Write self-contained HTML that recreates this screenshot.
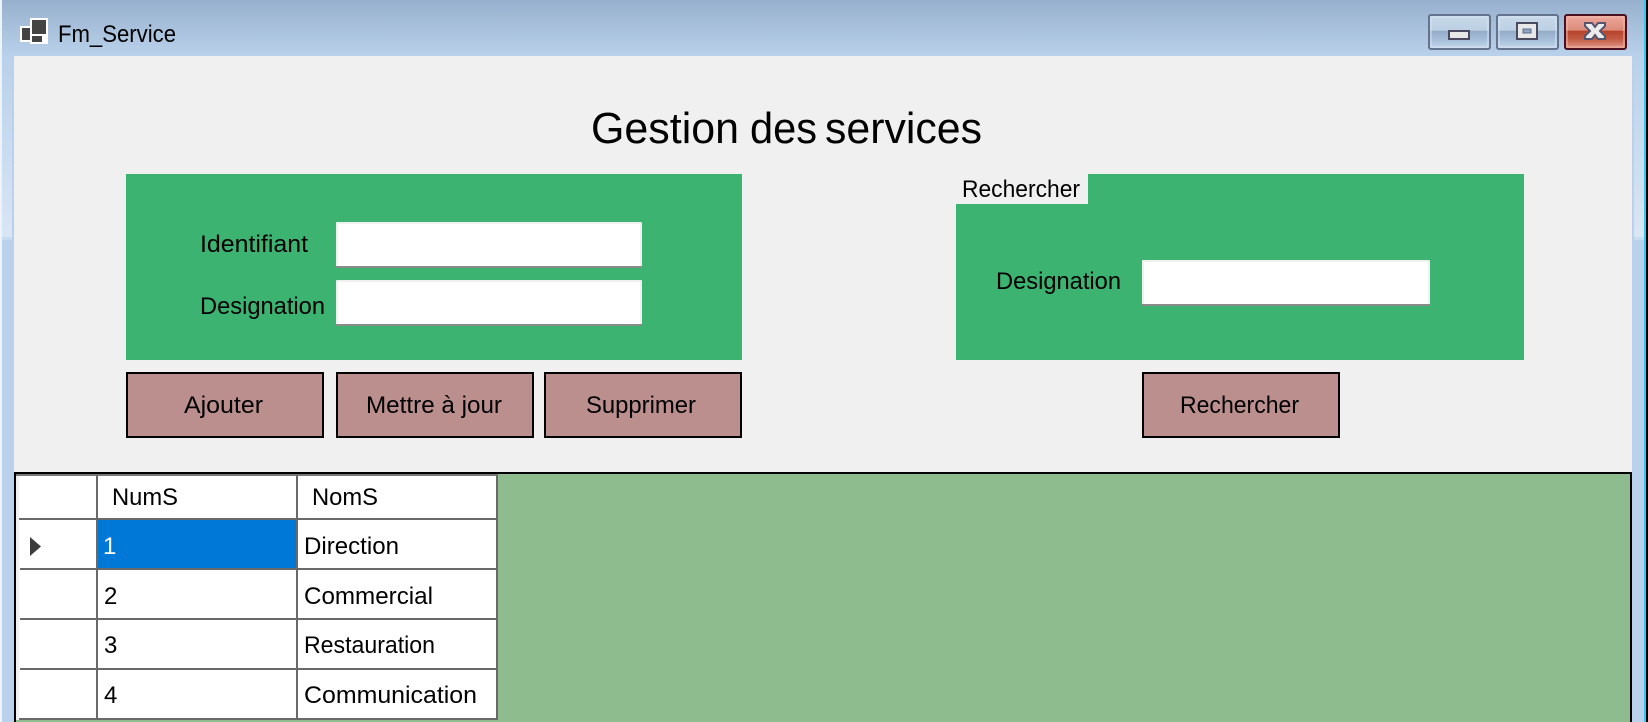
<!DOCTYPE html>
<html>
<head>
<meta charset="utf-8">
<title>Fm_Service</title>
<style>
html,body{margin:0;padding:0;width:1648px;height:722px;overflow:hidden;background:#b9d1ea}
svg{display:block}
text{font-family:"Liberation Sans",sans-serif;font-size:24px;fill:#000}
</style>
</head>
<body>
<svg width="1648" height="722" viewBox="0 0 1648 722" xmlns="http://www.w3.org/2000/svg">
<defs>
<linearGradient id="tb" x1="0" y1="0" x2="0" y2="1"><stop offset="0" stop-color="#97b0cd"/><stop offset="1" stop-color="#b9d1ea"/></linearGradient>
<linearGradient id="fr" x1="0" y1="0" x2="0" y2="1"><stop offset="0" stop-color="#b9d1ea"/><stop offset="1" stop-color="#d9e6f5"/></linearGradient>
<linearGradient id="bb" x1="0" y1="0" x2="0" y2="1"><stop offset="0" stop-color="#c8d9ea"/><stop offset=".45" stop-color="#bdd0e4"/><stop offset=".47" stop-color="#94acc6"/><stop offset=".7" stop-color="#a4bcd7"/><stop offset="1" stop-color="#c4d8ee"/></linearGradient>
<linearGradient id="cb" x1="0" y1="0" x2="0" y2="1"><stop offset="0" stop-color="#eeaaa0"/><stop offset=".45" stop-color="#dc8a78"/><stop offset=".47" stop-color="#b8432b"/><stop offset=".7" stop-color="#c25a44"/><stop offset="1" stop-color="#e49c8c"/></linearGradient>
</defs>

<!-- window frame -->
<rect width="1648" height="722" fill="#b9d1ea"/>
<rect width="1648" height="56" fill="url(#tb)"/>
<rect x="0" y="0" width="2" height="722" fill="#eef3f9"/>
<rect x="2" y="56" width="10" height="181" fill="url(#fr)"/>
<rect x="2" y="237" width="10" height="3" fill="#c9dbee"/>
<rect x="1634" y="56" width="10" height="181" fill="url(#fr)"/>
<rect x="1634" y="237" width="10" height="3" fill="#c9dbee"/>
<rect x="1644" y="0" width="2" height="722" fill="#35c8f0"/>
<rect x="1646" y="0" width="2" height="722" fill="#000"/>

<!-- title icon -->
<rect x="20" y="26" width="12" height="16" fill="#fff"/>
<rect x="22" y="28" width="9" height="12" fill="#444"/>
<rect x="30" y="18" width="18" height="26" fill="#fff"/>
<rect x="32" y="20" width="14" height="14" fill="#444"/>
<rect x="32" y="36" width="10" height="6" fill="#444"/>
<text x="58" y="42" textLength="118" lengthAdjust="spacingAndGlyphs">Fm_Service</text>

<!-- window buttons -->
<rect x="1429" y="15" width="61" height="34" rx="2" fill="url(#bb)" stroke="#64748f" stroke-width="2"/>
<rect x="1431" y="17" width="57" height="30" fill="none" stroke="#d8e5f2" stroke-width="1"/>
<rect x="1449" y="31" width="20" height="8" fill="#e8e8e8" stroke="#4a4a60" stroke-width="2"/>
<rect x="1497" y="15" width="61" height="34" rx="2" fill="url(#bb)" stroke="#64748f" stroke-width="2"/>
<rect x="1499" y="17" width="57" height="30" fill="none" stroke="#d8e5f2" stroke-width="1"/>
<rect x="1517" y="23" width="20" height="16" fill="#e8e8e8" stroke="#4a4a60" stroke-width="2"/>
<rect x="1523" y="29" width="8" height="4" fill="#8fa7c4" stroke="#5a6a88" stroke-width="1"/>
<rect x="1565" y="15" width="61" height="34" rx="2" fill="url(#cb)" stroke="#4a1020" stroke-width="2"/>
<rect x="1567" y="17" width="57" height="30" fill="none" stroke="#f0b8ac" stroke-width="1"/>
<path d="M1585 23H1592L1595 27L1598 23H1605V26L1600 31L1605 36V39H1598L1595 35L1592 39H1585V36L1590 31L1585 26Z" fill="#ececec" stroke="#55566e" stroke-width="2"/>

<!-- client area -->
<rect x="14" y="56" width="1618" height="666" fill="#f0f0f0"/>
<text x="591" y="143" style="font-size:44px" textLength="148" lengthAdjust="spacingAndGlyphs">Gestion</text>
<text x="750" y="143" style="font-size:44px" textLength="67" lengthAdjust="spacingAndGlyphs">des</text>
<text x="825" y="143" style="font-size:44px" textLength="157" lengthAdjust="spacingAndGlyphs">services</text>

<!-- left panel -->
<rect x="126" y="174" width="616" height="186" fill="#3cb371"/>
<text x="200" y="252" textLength="108" lengthAdjust="spacingAndGlyphs">Identifiant</text>
<text x="200" y="314" textLength="125" lengthAdjust="spacingAndGlyphs">Designation</text>
<rect x="336" y="222" width="306" height="46" rx="1" fill="#f0f0f0"/>
<rect x="338" y="224" width="302" height="42" fill="#fff"/>
<rect x="336" y="266" width="306" height="2" fill="#8a8a8a"/>
<rect x="336" y="280" width="306" height="46" rx="1" fill="#f0f0f0"/>
<rect x="338" y="282" width="302" height="42" fill="#fff"/>
<rect x="336" y="324" width="306" height="2" fill="#8a8a8a"/>

<!-- right panel -->
<rect x="956" y="174" width="568" height="186" fill="#3cb371"/>
<rect x="956" y="174" width="132" height="30" fill="#f0f0f0"/>
<text x="962" y="197" textLength="118" lengthAdjust="spacingAndGlyphs">Rechercher</text>
<text x="996" y="289" textLength="125" lengthAdjust="spacingAndGlyphs">Designation</text>
<rect x="1142" y="260" width="288" height="46" rx="1" fill="#f0f0f0"/>
<rect x="1144" y="262" width="284" height="42" fill="#fff"/>
<rect x="1142" y="304" width="288" height="2" fill="#8a8a8a"/>

<!-- buttons -->
<g fill="#bc8f8f" stroke="#000" stroke-width="2">
<rect x="127" y="373" width="196" height="64"/>
<rect x="337" y="373" width="196" height="64"/>
<rect x="545" y="373" width="196" height="64"/>
<rect x="1143" y="373" width="196" height="64"/>
</g>
<text x="184" y="413" textLength="79" lengthAdjust="spacingAndGlyphs">Ajouter</text>
<text x="366" y="413" textLength="136" lengthAdjust="spacingAndGlyphs">Mettre à jour</text>
<text x="586" y="413" textLength="110" lengthAdjust="spacingAndGlyphs">Supprimer</text>
<text x="1180" y="413" textLength="119" lengthAdjust="spacingAndGlyphs">Rechercher</text>

<!-- grid -->
<rect x="14" y="472" width="1618" height="250" fill="#000"/>
<rect x="16" y="474" width="1614" height="248" fill="#8fbc8f"/>
<rect x="16" y="474" width="3" height="246" fill="#f0f0f0"/>
<rect x="19" y="474" width="478" height="246" fill="#fff"/>
<g fill="#696969">
<rect x="16" y="474" width="482" height="2" opacity=".9"/>
<rect x="96" y="475" width="2" height="245"/>
<rect x="296" y="475" width="2" height="245"/>
<rect x="496" y="475" width="2" height="245"/>
<rect x="19" y="518" width="479" height="2"/>
<rect x="20" y="568" width="478" height="2"/>
<rect x="20" y="618" width="478" height="2"/>
<rect x="20" y="668" width="478" height="2"/>
<rect x="19" y="718" width="479" height="2"/>
</g>
<rect x="98" y="520" width="198" height="48" fill="#0078d7"/>
<path d="M30 537L41 546.5L30 556Z" fill="#3c3c3c"/>
<text x="112" y="505" textLength="66" lengthAdjust="spacingAndGlyphs">NumS</text>
<text x="312" y="505" textLength="66" lengthAdjust="spacingAndGlyphs">NomS</text>
<text x="103" y="554" style="fill:#fff">1</text>
<text x="304" y="554" textLength="95" lengthAdjust="spacingAndGlyphs">Direction</text>
<text x="104" y="604">2</text>
<text x="304" y="604" textLength="129" lengthAdjust="spacingAndGlyphs">Commercial</text>
<text x="104" y="653">3</text>
<text x="304" y="653" textLength="131" lengthAdjust="spacingAndGlyphs">Restauration</text>
<text x="104" y="703">4</text>
<text x="304" y="703" textLength="173" lengthAdjust="spacingAndGlyphs">Communication</text>
</svg>
</body>
</html>
